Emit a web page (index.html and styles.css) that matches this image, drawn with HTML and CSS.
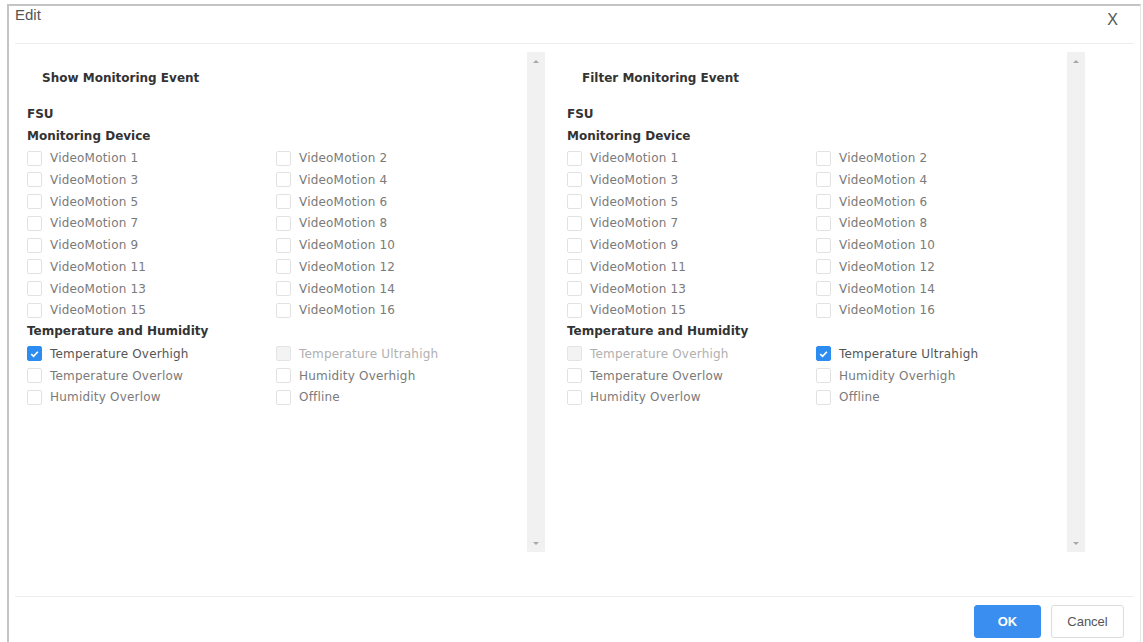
FILE: index.html
```html
<!DOCTYPE html>
<html>
<head>
<meta charset="utf-8">
<link rel="stylesheet" href="styles.css">
</head>
<body>
<div class="dialog">
  <div class="header">
    <span class="title">Edit</span>
    <span class="close">X</span>
  </div>
  <div class="body">
    <div class="panel">
      <div class="content">
        <div class="heading">Show Monitoring Event</div>
        <div class="group">FSU</div>
        <div class="group">Monitoring Device</div>
        <div class="grid">
          <label class="item"><span class="box"></span>VideoMotion 1</label>
          <label class="item"><span class="box"></span>VideoMotion 2</label>
          <label class="item"><span class="box"></span>VideoMotion 3</label>
          <label class="item"><span class="box"></span>VideoMotion 4</label>
          <label class="item"><span class="box"></span>VideoMotion 5</label>
          <label class="item"><span class="box"></span>VideoMotion 6</label>
          <label class="item"><span class="box"></span>VideoMotion 7</label>
          <label class="item"><span class="box"></span>VideoMotion 8</label>
          <label class="item"><span class="box"></span>VideoMotion 9</label>
          <label class="item"><span class="box"></span>VideoMotion 10</label>
          <label class="item"><span class="box"></span>VideoMotion 11</label>
          <label class="item"><span class="box"></span>VideoMotion 12</label>
          <label class="item"><span class="box"></span>VideoMotion 13</label>
          <label class="item"><span class="box"></span>VideoMotion 14</label>
          <label class="item"><span class="box"></span>VideoMotion 15</label>
          <label class="item"><span class="box"></span>VideoMotion 16</label>
        </div>
        <div class="group">Temperature and Humidity</div>
        <div class="grid">
          <label class="item checked"><span class="box"><svg viewBox="0 0 14 14" width="14" height="14"><path d="M3.5 7.2 L6 9.6 L10.6 4.6" fill="none" stroke="#fff" stroke-width="1.8"/></svg></span>Temperature Overhigh</label>
          <label class="item disabled"><span class="box"></span>Temperature Ultrahigh</label>
          <label class="item"><span class="box"></span>Temperature Overlow</label>
          <label class="item"><span class="box"></span>Humidity Overhigh</label>
          <label class="item"><span class="box"></span>Humidity Overlow</label>
          <label class="item"><span class="box"></span>Offline</label>
        </div>
      </div>
      <div class="scrollbar"><span class="arrow up"></span><span class="arrow down"></span></div>
    </div>
    <div class="panel">
      <div class="content">
        <div class="heading">Filter Monitoring Event</div>
        <div class="group">FSU</div>
        <div class="group">Monitoring Device</div>
        <div class="grid">
          <label class="item"><span class="box"></span>VideoMotion 1</label>
          <label class="item"><span class="box"></span>VideoMotion 2</label>
          <label class="item"><span class="box"></span>VideoMotion 3</label>
          <label class="item"><span class="box"></span>VideoMotion 4</label>
          <label class="item"><span class="box"></span>VideoMotion 5</label>
          <label class="item"><span class="box"></span>VideoMotion 6</label>
          <label class="item"><span class="box"></span>VideoMotion 7</label>
          <label class="item"><span class="box"></span>VideoMotion 8</label>
          <label class="item"><span class="box"></span>VideoMotion 9</label>
          <label class="item"><span class="box"></span>VideoMotion 10</label>
          <label class="item"><span class="box"></span>VideoMotion 11</label>
          <label class="item"><span class="box"></span>VideoMotion 12</label>
          <label class="item"><span class="box"></span>VideoMotion 13</label>
          <label class="item"><span class="box"></span>VideoMotion 14</label>
          <label class="item"><span class="box"></span>VideoMotion 15</label>
          <label class="item"><span class="box"></span>VideoMotion 16</label>
        </div>
        <div class="group">Temperature and Humidity</div>
        <div class="grid">
          <label class="item disabled"><span class="box"></span>Temperature Overhigh</label>
          <label class="item checked"><span class="box"><svg viewBox="0 0 14 14" width="14" height="14"><path d="M3.5 7.2 L6 9.6 L10.6 4.6" fill="none" stroke="#fff" stroke-width="1.8"/></svg></span>Temperature Ultrahigh</label>
          <label class="item"><span class="box"></span>Temperature Overlow</label>
          <label class="item"><span class="box"></span>Humidity Overhigh</label>
          <label class="item"><span class="box"></span>Humidity Overlow</label>
          <label class="item"><span class="box"></span>Offline</label>
        </div>
      </div>
      <div class="scrollbar"><span class="arrow up"></span><span class="arrow down"></span></div>
    </div>
  </div>
  <div class="footer">
    <button class="btn primary">OK</button>
    <button class="btn">Cancel</button>
  </div>
</div>
</body>
</html>
```
FILE: styles.css
```css
html, body {
  margin: 0;
  padding: 0;
  background: #fff;
  overflow: hidden;
}
body {
  font-family: "DejaVu Sans", "Liberation Sans", sans-serif;
  font-size: 12px;
  color: #333;
}
.dialog {
  margin: 4px 2px 0 7px;
  height: 660px;
  border-left: 2px solid #c4c4c4;
  border-top: 2px solid #c4c4c4;
  border-right: 1px solid #e6e6e6;
  padding: 0 6px;
  box-sizing: border-box;
}
.header {
  height: 38px;
  border-bottom: 1px solid #ededed;
  display: flex;
  justify-content: space-between;
  align-items: flex-start;
  box-sizing: border-box;
}
.title {
  font-family: "Liberation Sans", sans-serif;
  font-size: 15px;
  color: #555;
  line-height: 18px;
  padding-top: 0;
}
.close {
  font-family: "Liberation Sans", sans-serif;
  font-size: 16px;
  color: #555;
  line-height: 18px;
  padding-top: 5px;
  margin-right: 16px;
}
.body {
  display: flex;
  gap: 10px;
  padding-top: 8px;
  height: 552px;
  box-sizing: border-box;
}
.panel {
  width: 530px;
  height: 500px;
  display: flex;
}
.content {
  flex: 1;
  padding: 16px 0 0 12px;
}
.heading {
  font-weight: bold;
  height: 21.75px;
  line-height: 21.75px;
  padding-left: 15px;
  margin-bottom: 14px;
  color: #333;
}
.group {
  font-weight: bold;
  height: 21.75px;
  line-height: 21.75px;
  color: #333;
}
.grid {
  display: grid;
  grid-template-columns: 249px 249px;
}
.item {
  display: flex;
  align-items: center;
  height: 21.75px;
  color: #7a7a7a;
  letter-spacing: 0.2px;
}
.box {
  width: 15px;
  height: 15px;
  border: 1px solid #e2e2e2;
  border-radius: 2px;
  box-sizing: border-box;
  margin-right: 8px;
  background: #fff;
  display: flex;
  align-items: center;
  justify-content: center;
}
.checked {
  color: #555;
}
.checked .box {
  background: #2d8cf0;
  border-color: #2d8cf0;
}
.disabled {
  color: #b0b0b0;
}
.disabled .box {
  background: #f3f3f3;
  border-color: #e4e4e4;
}
.scrollbar {
  width: 18px;
  height: 500px;
  background: #f1f1f1;
  display: flex;
  flex-direction: column;
  justify-content: space-between;
  align-items: center;
  padding: 8px 0 7px;
  box-sizing: border-box;
}
.arrow {
  width: 0;
  height: 0;
  border-left: 3px solid transparent;
  border-right: 3px solid transparent;
}
.arrow.up {
  border-bottom: 3px solid #a8a8a8;
}
.arrow.down {
  border-top: 3px solid #a8a8a8;
}
.footer {
  border-top: 1px solid #eeeeee;
  display: flex;
  justify-content: flex-end;
  gap: 10px;
  padding: 8px 10px 0 0;
}
.btn {
  height: 33px;
  font-family: "Liberation Sans", sans-serif;
  font-size: 13px;
  border-radius: 3px;
  border: 1px solid #dcdcdc;
  background: #fff;
  color: #555;
  padding: 0;
  width: 73px;
}
.btn.primary {
  width: 67px;
  background: #3a8ef0;
  border-color: #3a8ef0;
  color: #fff;
  font-weight: bold;
}
```
